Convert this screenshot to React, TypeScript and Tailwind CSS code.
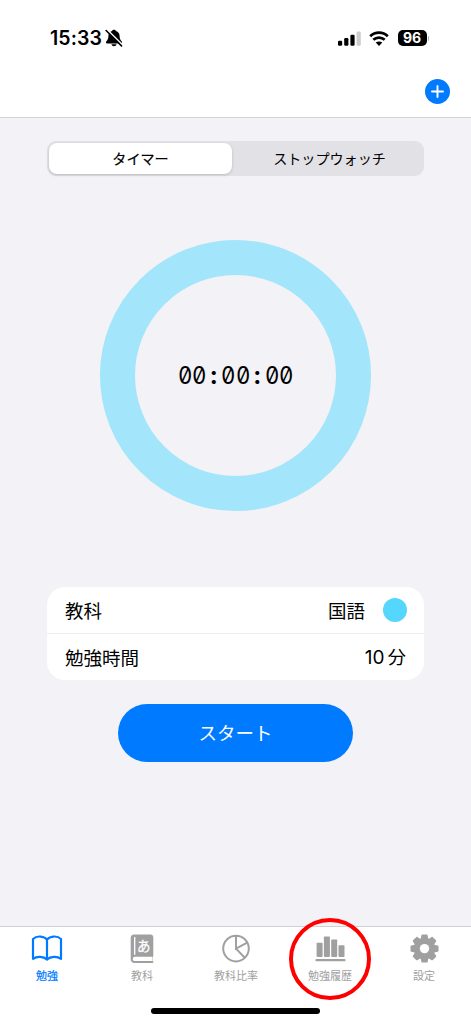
import { useState, type ReactNode } from "react";
import clsx from "clsx";

type Mode = "timer" | "stopwatch";

const MODES: { id: Mode; label: string }[] = [
  { id: "timer", label: "タイマー" },
  { id: "stopwatch", label: "ストップウォッチ" },
];

const BellSlashIcon = () => (
  <svg className="h-[18px] w-[18px]" viewBox="0 0 18 18" fill="none">
    <path
      d="M9 .8c-1 0-1.700.5-1.900 1.200C4.600 2.800 3.400 4.700 3.400 7c0 2.900-.7 3.700-2 5.200-.8.900-.4 2.200.5 2.200h14.200c.9 0 1.300-1.300.5-2.200-1.300-1.500-2-2.300-2-5.200 0-2.300-1.200-4.200-3.700-5C10.700 1.300 10 .8 9 .8Z"
      fill="black"
    />
    <path d="M6.400 15.200h5.200c-.3 1.300-1.300 2-2.600 2s-2.300-.7-2.600-2Z" fill="black" />
    <path d="M2.300 .7 17.500 15.900" stroke="white" strokeWidth="1.500" />
    <path d="M1.100 1.500 16.500 16.900" stroke="black" strokeWidth="1.600" strokeLinecap="round" />
  </svg>
);

const SignalIcon = () => (
  <svg className="h-[15px] w-[23px]" viewBox="0 0 23 15">
    <rect x="0" y="9.700" width="4.200" height="5" rx="1.200" />
    <rect x="6.200" y="7" width="4.200" height="7.700" rx="1.200" />
    <rect x="12.400" y="3.800" width="4.200" height="10.900" rx="1.200" />
    <rect x="18.600" y="0.500" width="4.200" height="14.200" rx="1.200" fill="#cdcdcf" />
  </svg>
);

const WifiIcon = () => (
  <svg className="h-[15px] w-5" viewBox="0 0 20 15" fill="none" stroke="black" strokeWidth="2.700">
    <path d="M1.200 5.200C6.100.500 13.900.500 18.800 5.200" />
    <path d="M4.300 8.800c3.200-3 8.200-3 11.400 0" />
    <path d="M6.700 11.600c1.900-1.600 4.700-1.600 6.600 0L10 14.900Z" fill="black" stroke="none" />
  </svg>
);

const BookIcon = () => (
  <svg
    className="h-8 w-8"
    viewBox="0 0 32 32"
    fill="none"
    stroke="currentColor"
    strokeWidth="2.200"
    strokeLinecap="round"
    strokeLinejoin="round"
  >
    <path d="M16 6.800c-2.300-3.800-10.200-4.600-14-.8v19.800c3.800-2.700 10.400-2.600 14 .6 3.600-3.200 10.200-3.300 14-.6V6c-3.800-3.800-11.700-3-14 .8Z" />
    <path d="M16 6.800v19.600" />
  </svg>
);

const SubjectIcon = () => (
  <svg className="h-8 w-8" viewBox="0 0 32 32" fill="currentColor">
    <path d="M8 1.500h16.500c1.700 0 2.800 1.100 2.800 2.800v17.900c0 .9-.3 1.500-.9 1.900v4.200h.3c1 0 1 1.800 0 1.800H8.500c-2.300 0-3.800-1.500-3.800-3.800V4.800c0-2 1.300-3.300 3.300-3.300Z" />
    <path d="M8.700 4v17.800" stroke="white" strokeWidth="1.300" />
    <path d="M9 23.700h17v4.400H9c-3 0-3-4.400 0-4.400Z" fill="white" />
    <text
      x="17.800"
      y="17.800"
      fill="white"
      fontSize="13.500"
      stroke="white"
      strokeWidth="0.300"
      textAnchor="middle"
      fontFamily="'Noto Sans CJK JP', sans-serif"
    >
      あ
    </text>
  </svg>
);

const PieIcon = () => (
  <svg className="h-8 w-8" viewBox="0 0 32 32" fill="none" stroke="currentColor" strokeWidth="2">
    <circle cx="16" cy="15.600" r="12.800" />
    <path d="M16 2.800v12.800l11.200-6M16 15.600l8.800 9.200" />
  </svg>
);

const BarsIcon = () => (
  <svg className="h-8 w-8" viewBox="0 0 32 32" fill="currentColor">
    <rect x="2.600" y="9.700" width="6" height="14.200" rx="0.800" />
    <rect x="9.900" y="3.500" width="6" height="20.400" rx="0.800" />
    <rect x="17.200" y="6.500" width="6" height="17.400" rx="0.800" />
    <rect x="24.500" y="12.300" width="6" height="11.600" rx="0.800" />
    <rect x="1.500" y="26" width="30" height="2.200" rx="0.800" />
  </svg>
);

const GEAR_ANGLES = [0, 45, 90, 135];

const GearIcon = () => (
  <svg className="h-8 w-8" viewBox="0 0 32 32" fill="currentColor">
    <g transform="translate(.5 -.4)">
      {GEAR_ANGLES.map((angle) => (
        <path
          key={angle}
          d="M13.800 2h4.400c.5 0 .8.300.9.700l1.100 5v16.600l-1.100 5c-.1.400-.4.700-.9.700h-4.400c-.5 0-.8-.3-.9-.7l-1.100-5V7.700l1.100-5c.1-.4.4-.7.9-.7Z"
          transform={`rotate(${angle} 16 16)`}
        />
      ))}
      <circle cx="16" cy="16" r="10.700" />
      <circle cx="16" cy="16" r="4.700" fill="white" />
    </g>
  </svg>
);

const TABS: { label: string; icon: ReactNode; highlighted?: boolean }[] = [
  { label: "勉強", icon: <BookIcon /> },
  { label: "教科", icon: <SubjectIcon /> },
  { label: "教科比率", icon: <PieIcon /> },
  { label: "勉強履歴", icon: <BarsIcon />, highlighted: true },
  { label: "設定", icon: <GearIcon /> },
];

const StatusBar = () => (
  <div className="flex h-[76px] items-center pr-[42px] pl-[50px]">
    <span className="pt-[2px] font-['Inter'] text-[19.500px] font-semibold tracking-[0.1px]">15:33</span>
    <div className="ml-[3px]">
      <BellSlashIcon />
    </div>
    <div className="ml-auto flex items-center">
      <SignalIcon />
      <div className="ml-2">
        <WifiIcon />
      </div>
      <div className="ml-[9px] flex h-4 w-[29px] items-center justify-center rounded-[5px] bg-black font-['Inter'] text-sm font-bold text-white">
        96
      </div>
      <div className="ml-px h-[5px] w-[1.500px] rounded-r bg-[#b5b5b7]" />
    </div>
  </div>
);

const Clock = ({ value }: { value: string }) => (
  <div className="flex font-['Inter'] text-[24px] leading-none">
    {value.split("").map((char, idx) => (
      <span
        key={idx}
        className={clsx(
          "flex w-[14.500px] justify-center slashed-zero",
          char === ":" ? "font-bold" : "scale-x-[0.92]"
        )}
      >
        {char}
      </span>
    ))}
  </div>
);

const App = () => {
  const [mode, setMode] = useState<Mode>("timer");
  const [activeTab, setActiveTab] = useState(0);

  return (
    <div className="flex h-[1024px] w-[471px] flex-col overflow-hidden bg-[#f2f2f7] font-['Inter','Noto_Sans_CJK_JP',sans-serif] text-black">
      <header className="h-[118px] shrink-0 border-b border-[#d5d5d9] bg-white">
        <StatusBar />
        <div className="flex justify-end pt-[3px] pr-[21px]">
          <button aria-label="追加" className="flex size-[25px] items-center justify-center rounded-full bg-[#007aff]">
            <svg className="size-[13px]" viewBox="0 0 13 13" stroke="white" strokeWidth="1.900" strokeLinecap="round">
              <path d="M6.500 1v11M1 6.500h11" />
            </svg>
          </button>
        </div>
      </header>

      <main className="flex flex-1 flex-col items-center pt-[23px]">
        <div className="flex h-[35px] w-[377px] rounded-[9px] bg-[#e2e1e6] p-[2px]">
          {MODES.map(({ id, label }) => (
            <button
              key={id}
              onClick={() => setMode(id)}
              className={clsx(
                "flex items-center justify-center rounded-lg text-[14.100px]",
                id === "timer" ? "w-[183px]" : "flex-1 pl-[5px]",
                mode === id && "bg-white shadow-[0_1px_3px_rgba(0,0,0,0.18)] [-webkit-text-stroke:0.2px_black]"
              )}
            >
              {label}
            </button>
          ))}
        </div>

        <div className="mt-16 flex size-[271px] items-center justify-center rounded-full border-[35px] border-[#a3e5fa]">
          <Clock value="00:00:00" />
        </div>

        <div className="mt-[76px] w-[377px] rounded-[18px] bg-white text-[18.500px]">
          <div className="flex h-[47px] items-center border-b border-[#eeeef1] pr-[17px] pl-[18px]">
            <span className="pt-[3px]">教科</span>
            <span className="ml-auto pt-[3px]">国語</span>
            <span className="ml-[18px] size-6 rounded-full bg-[#55d6fd]" />
          </div>
          <div className="flex h-[46px] items-center justify-between pt-[3px] pr-[18px] pl-[18px]">
            <span>勉強時間</span>
            <span className="flex gap-[3px]">
              <span className="text-[19px]">10</span>
              <span>分</span>
            </span>
          </div>
        </div>

        <button className="mt-6 h-[58px] w-[235px] rounded-full bg-[#007aff] pt-[2px] text-[18.500px] text-white">
          スタート
        </button>
      </main>

      <nav className="flex h-[98px] shrink-0 flex-col border-t border-[#d0d0d4] bg-white">
        <div className="flex h-[81px]">
          {TABS.map(({ label, icon, highlighted }, idx) => (
            <button
              key={label}
              onClick={() => setActiveTab(idx)}
              className={clsx(
                "relative flex flex-1 flex-col items-center pt-[6px]",
                activeTab === idx
                  ? "pr-px text-[#007aff] [-webkit-text-stroke:0.200px_#007aff]"
                  : "text-[#a0a0a0]"
              )}
            >
              <span className="-ml-px">{icon}</span>
              <span className="mt-[3px] text-[11px] leading-4">{label}</span>
              {highlighted && (
                <span className="absolute top-[-9px] left-1/2 size-[82px] -translate-x-1/2 rounded-full border-4 border-[#ff0000]" />
              )}
            </button>
          ))}
        </div>
        <div className="mx-auto h-[6px] w-[169px] rounded-full bg-black" />
      </nav>
    </div>
  );
};

export default App;
